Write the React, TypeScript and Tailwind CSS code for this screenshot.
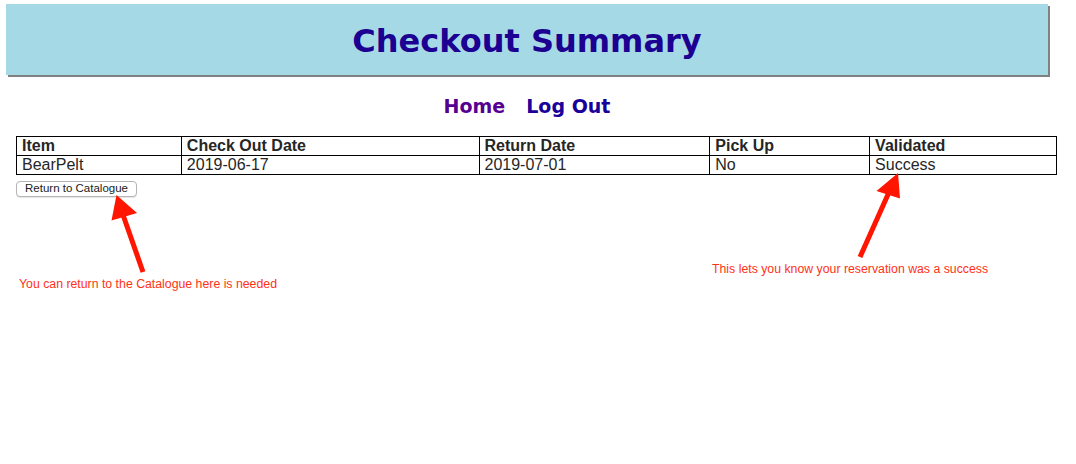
const cols = [
  { label: 'Item', value: 'BearPelt', w: 'w-[165px]' },
  { label: 'Check Out Date', value: '2019-06-17', w: 'w-[298px]' },
  { label: 'Return Date', value: '2019-07-01', w: 'w-[231px]' },
  { label: 'Pick Up', value: 'No', w: 'w-[160px]' },
  { label: 'Validated', value: 'Success', w: 'w-[187px]' },
];

const App = () => {
  return (
    <div className="relative w-[1076px] h-[464px] bg-white font-['Liberation_Sans',Arial,sans-serif] overflow-hidden">
      <header className="mt-[4px] ml-[6px] w-[1042px] h-[71px] bg-[#a6d9e6] shadow-[2px_2px_0_#808080] flex items-center justify-center">
        <h1 className="font-['DejaVu_Sans',Verdana,sans-serif] font-bold text-[32px] text-[#1b0092] leading-none mt-[2px]">Checkout Summary</h1>
      </header>

      <nav className="mt-[19px] ml-[6px] w-[1042px] flex justify-center gap-[21px] font-['DejaVu_Sans',Verdana,sans-serif] font-bold text-[19px] leading-[24px]">
        <a href="#" className="text-[#560092]">Home</a>
        <a href="#" className="text-[#1a009b]">Log Out</a>
      </nav>

      <table className="mt-[18px] ml-[16px] w-[1041px] border-collapse text-[16px] text-[#262626] leading-[18px]">
        <thead>
          <tr>
            {cols.map((c) => (
              <th key={c.label} className={`${c.w} border border-black text-left font-bold px-[5px] py-0`}>
                {c.label}
              </th>
            ))}
          </tr>
        </thead>
        <tbody>
          <tr>
            {cols.map((c) => (
              <td key={c.label} className="border border-black px-[5px] py-0">
                {c.value}
              </td>
            ))}
          </tr>
        </tbody>
      </table>

      <button className="mt-[2px] ml-[16px] h-[16px] w-[121px] rounded-[4px] border border-[#b5b5b5] bg-white text-[11.5px] leading-none text-[#222] shadow-[0_1px_1px_rgba(0,0,0,0.1)]">
        Return to Catalogue
      </button>

      {/* annotations */}
      <svg className="absolute left-0 top-0" width="1076" height="464">
        <line x1="143" y1="272" x2="122" y2="212" stroke="#ff1500" strokeWidth="5" />
        <polygon points="116.5,195 111.5,220.5 137,213" fill="#ff1500" />
        <line x1="860" y1="257" x2="890" y2="190" stroke="#ff1500" strokeWidth="5" />
        <polygon points="898,173 876.5,191 900,198.5" fill="#ff1500" />
      </svg>
      <div className="absolute left-[19px] top-[277px] text-[12.3px] leading-[15px] text-[#ff3216]">
        You can return to the Catalogue here is needed
      </div>
      <div className="absolute left-[712px] top-[262px] text-[12.3px] leading-[15px] text-[#ff3216]">
        This lets you know your reservation was a success
      </div>
    </div>
  );
};

export default App;
